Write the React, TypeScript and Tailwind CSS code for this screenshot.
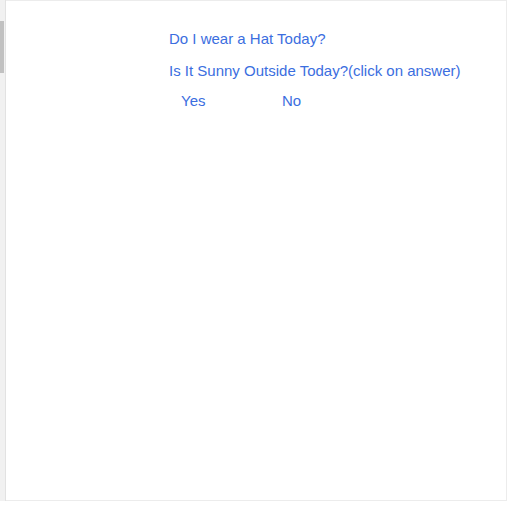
export default function App() {
  return (
    <div className="flex h-[507px] w-[510px] flex-col bg-white" style={{ fontFamily: '"Liberation Sans", Arial, sans-serif' }}>
      <div className="flex h-[501px]">
        {/* left scroll strip */}
        <div className="flex w-[6px] flex-col border-r border-[#e2e2e2] bg-[#f1f1f1]">
          <div className="mt-[21px] h-[52px] w-[4px] bg-[#c1c1c1]" />
        </div>
        <div className="flex flex-1 flex-col border-t border-b border-r border-[#ececec] bg-white">
          <div className="flex flex-col pl-[163px] pt-[29px] text-[15px] leading-[17px] text-[#3b6ee0]">
            <div>Do I wear a Hat Today?</div>
            <div className="mt-[15px]">Is It Sunny Outside Today?(click on answer)</div>
            <div className="mt-[13px] flex pl-[12px]">
              <span className="w-[101px] cursor-pointer">Yes</span>
              <span className="cursor-pointer">No</span>
            </div>
          </div>
        </div>
        <div className="w-[3px]" />
      </div>
    </div>
  );
}
